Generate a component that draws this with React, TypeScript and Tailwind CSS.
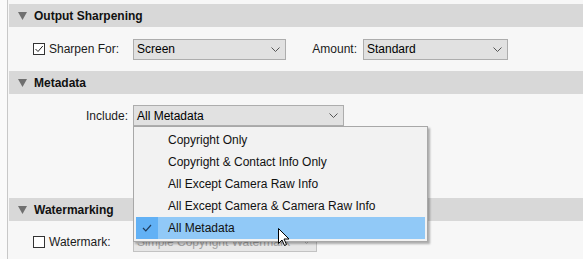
import React from "react";

const Chevron = ({ color = "#555" }: { color?: string }) => (
  <svg width="9" height="5" viewBox="0 0 9 5" className="shrink-0">
    <path d="M0.5 0.5 L4.5 4.5 L8.5 0.5" fill="none" stroke={color} strokeWidth="1" />
  </svg>
);

const Triangle = () => (
  <svg width="9" height="8" viewBox="0 0 9 8" className="shrink-0">
    <path d="M0 0 L9 0 L4.5 8 Z" fill="#6f6f6f" />
  </svg>
);

const Checkbox = ({ checked }: { checked?: boolean }) => (
  <div className="w-[12px] h-[12px] border border-[#333] bg-white flex items-center justify-center shrink-0">
    {checked && (
      <svg width="10" height="10" viewBox="0 0 10 10">
        <path d="M1.5 5 L4 7.5 L8.8 2" fill="none" stroke="#222" strokeWidth="1" />
      </svg>
    )}
  </div>
);

const Header = ({ title }: { title: string }) => (
  <div className="h-[23px] bg-[#d8d8d8] flex items-center pl-[9px]">
    <Triangle />
    <span className="ml-[7px] font-bold text-[12px] text-[#111]">{title}</span>
  </div>
);

const Select = ({
  value,
  width,
  disabled,
}: {
  value: string;
  width: string;
  disabled?: boolean;
}) => (
  <div
    className={`${width} h-[21px] border flex items-center justify-between pl-[3px] pr-[5px] ${
      disabled
        ? "bg-[#e6e6e6] border-[#c2c2c2] text-[#a3a3a3]"
        : "bg-[#e1e1e1] border-[#adadad] text-[#000]"
    }`}
  >
    <span className="text-[12px] whitespace-nowrap">{value}</span>
    <Chevron color={disabled ? "#b0b0b0" : "#555"} />
  </div>
);

export default function App() {
  const items = [
    "Copyright Only",
    "Copyright & Contact Info Only",
    "All Except Camera Raw Info",
    "All Except Camera & Camera Raw Info",
    "All Metadata",
  ];
  return (
    <div
      className="relative w-[583px] h-[259px] overflow-hidden bg-[#f7f7f7] flex text-[#1b1b1b]"
      style={{ fontFamily: '"Liberation Sans", Arial, sans-serif' }}
    >
      <div className="w-[7px] bg-[#fafafa]" />
      <div className="w-px bg-[#c8c8c8]" />
      <div className="w-px bg-[#f7f7f7]" />
      <div className="flex-1 flex flex-col pt-[4px]">
        <Header title="Output Sharpening" />
        <div className="h-[44px] flex items-center">
          <div className="w-[124px] flex items-center pl-[24px]">
            <Checkbox checked />
            <span className="ml-[4px] text-[12px]">Sharpen For:</span>
          </div>
          <Select value="Screen" width="w-[153px]" />
          <div className="w-[77px] text-right pr-[6px] text-[12px]">Amount:</div>
          <Select value="Standard" width="w-[145px]" />
        </div>
        <Header title="Metadata" />
        <div className="h-[104px] pt-[11px]">
          <div className="flex items-center">
            <div className="w-[124px] text-right pr-[5px] text-[12px]">Include:</div>
            <Select value="All Metadata" width="w-[211px]" />
          </div>
        </div>
        <Header title="Watermarking" />
        <div className="pt-[10px] flex items-center">
          <div className="w-[124px] flex items-center pl-[24px]">
            <Checkbox />
            <span className="ml-[4px] text-[12px]">Watermark:</span>
          </div>
          <Select value="Simple Copyright Watermark" width="w-[184px]" disabled />
        </div>
      </div>

      {/* Dropdown menu */}
      <div className="absolute left-[133px] top-[126px] w-[295px] h-[116px] bg-[#f2f2f2] border border-[#a8a8a8] p-[2px] shadow-[2px_2px_2px_rgba(0,0,0,0.3)]">
        {items.map((it, i) => {
          const sel = i === items.length - 1;
          return (
            <div
              key={it}
              className={`h-[22px] flex items-center ${sel ? "bg-[#91c9f7]" : ""}`}
            >
              <div
                className={`w-[22px] h-full flex items-center justify-center ${
                  sel ? "bg-[#62b1f5]" : ""
                }`}
              >
                {sel && (
                  <svg width="10" height="8" viewBox="0 0 10 8">
                    <path d="M1 4 L3.8 6.8 L9 1" fill="none" stroke="#1f3a5a" strokeWidth="1.2" />
                  </svg>
                )}
              </div>
              <span className="ml-[10px] text-[12px] text-[#111] whitespace-nowrap">{it}</span>
            </div>
          );
        })}
      </div>

      {/* Cursor */}
      <svg
        className="absolute left-[278px] top-[228px]"
        width="12"
        height="19"
        viewBox="0 0 12 19"
      >
        <path
          d="M0.5 0.5 L0.5 15.5 L4 12 L6.5 17.5 L8.5 16.5 L6 11 L11 11 Z"
          fill="#fff"
          stroke="#000"
          strokeWidth="1"
          strokeLinejoin="miter"
        />
      </svg>
    </div>
  );
}
